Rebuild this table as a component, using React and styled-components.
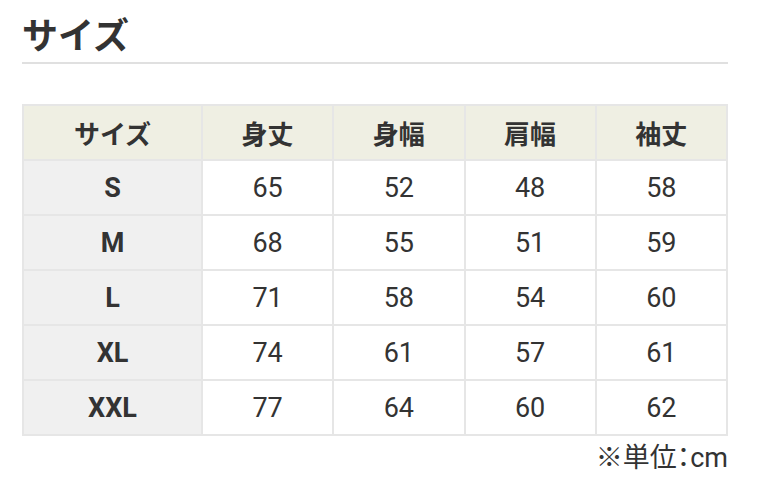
import React from "react";
import styled, { createGlobalStyle } from "styled-components";

const GlobalStyle = createGlobalStyle`
  html, body {
    margin: 0;
    padding: 0;
    background: #fff;
  }
  body {
    font-family: Roboto, "Noto Sans CJK JP", sans-serif;
    color: #333;
  }
`;

const Page = styled.div`
  width: 706px;
  padding: 9px 0 0 22px;
`;

const Heading = styled.h2`
  margin: 0;
  font-family: "Noto Sans CJK JP", sans-serif;
  font-size: 36px;
  font-weight: 700;
  line-height: 48px;
  color: #333;
  padding-bottom: 5px;
  border-bottom: 2px solid #e0e0e0;
`;

const Table = styled.table`
  margin-top: 40px;
  width: 706px;
  border-collapse: collapse;
  table-layout: fixed;
  border: 2px solid #e6e6e6;
`;

const Cell = styled.td`
  width: ${(p) => (p.$first ? "177px" : "auto")};
  height: 53px;
  padding: 0;
  text-align: center;
  vertical-align: middle;
  border: 2px solid #e6e6e6;
  font-family: Roboto, "Noto Sans CJK JP", sans-serif;
  font-size: 27px;
  font-weight: ${(p) => (p.$first ? 700 : 400)};
  background: ${(p) => (p.$first ? "#f0f0f0" : "#fff")};
  color: #333;
`;

const HeadCell = styled.th`
  width: ${(p) => (p.$first ? "177px" : "auto")};
  height: 53px;
  padding: 0;
  text-align: center;
  vertical-align: middle;
  border: 2px solid #e6e6e6;
  font-family: "Noto Sans CJK JP", sans-serif;
  font-size: 26px;
  font-weight: 700;
  background: #efefe3;
  color: #333;
`;

const Note = styled.p`
  margin: 5px 0 0;
  text-align: right;
  font-size: 27px;
  font-family: Roboto, "Noto Sans CJK JP", sans-serif;
  font-feature-settings: "palt";
  color: #333;
  line-height: 34px;
`;

const heads = ["サイズ", "身丈", "身幅", "肩幅", "袖丈"];
const rows = [
  ["S", 65, 52, 48, 58],
  ["M", 68, 55, 51, 59],
  ["L", 71, 58, 54, 60],
  ["XL", 74, 61, 57, 61],
  ["XXL", 77, 64, 60, 62],
];

export default function App() {
  return (
    <Page>
      <GlobalStyle />
      <Heading>サイズ</Heading>
      <Table>
        <thead>
          <tr>
            {heads.map((h, i) => (
              <HeadCell key={h} $first={i === 0}>
                {h}
              </HeadCell>
            ))}
          </tr>
        </thead>
        <tbody>
          {rows.map((r) => (
            <tr key={r[0]}>
              {r.map((v, i) => (
                <Cell key={i} $first={i === 0}>
                  {v}
                </Cell>
              ))}
            </tr>
          ))}
        </tbody>
      </Table>
      <Note>※単位：cm</Note>
    </Page>
  );
}
